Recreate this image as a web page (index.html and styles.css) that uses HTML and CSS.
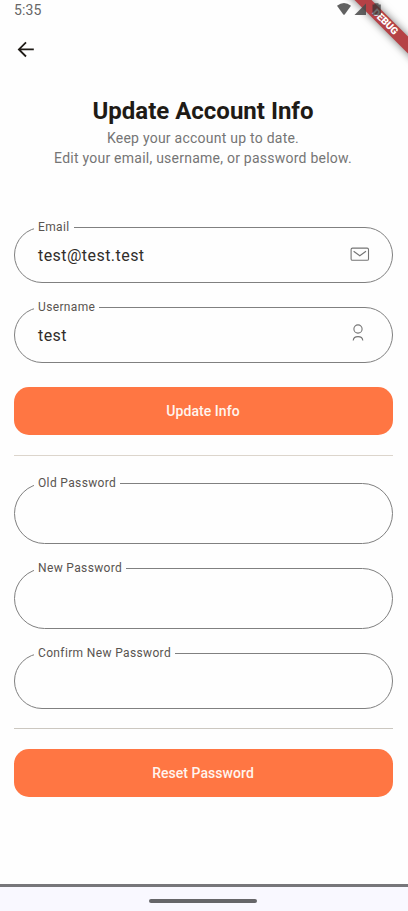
FILE: index.html
```html
<!DOCTYPE html>
<html lang="en">
<head>
<meta charset="utf-8">
<title>Update Account Info</title>
<link rel="stylesheet" href="styles.css">
</head>
<body>
<div class="screen">
  <header class="status">
    <span class="time">5:35</span>
    <svg class="status-icons" width="48" height="16" viewBox="0 0 48 16" fill="#4b4b4b" fill-opacity=".88">
      <path d="M0 5.8Q7 .4 14 5.8L7.7 14.5Q7 15.2 6.3 14.5Z"/>
      <path d="M29 3.5V15H17.5Z"/>
      <path fill="#333" fill-opacity=".72" d="M35.5 4.6h2V3.2h4v1.4h2.3V15.2h-8.3Z"/>
    </svg>
  </header>
  <div class="debug"><span>DEBUG</span></div>
  <nav class="toolbar">
    <svg width="18" height="18" viewBox="0 0 18 18" fill="none" stroke="#1f1b16" stroke-width="1.8"><path d="M16.8 9.4H2.2M9 2.3L1.9 9.4L9 16.5"/></svg>
  </nav>
  <main class="content">
    <h1>Update Account Info</h1>
    <p class="intro">Keep your account up to date.<br>Edit your email, username, or password below.</p>
    <form class="form">
      <div class="field">
        <label>Email</label>
        <span class="value">test@test.test</span>
        <svg class="icon mail" width="20" height="15" viewBox="0 0 20 15" fill="none" stroke="#747474" stroke-width="1.1"><rect x="1.1" y="1.1" width="17.4" height="12.2" rx="1.4"/><path d="M3.6 4.2L9.8 8.8L16 4.2"/></svg>
      </div>
      <div class="field">
        <label>Username</label>
        <span class="value">test</span>
        <svg class="icon user" width="12" height="18" viewBox="0 0 12 18" fill="none" stroke="#747474" stroke-width="1.1"><circle cx="6" cy="5" r="4.1"/><path d="M1.2 16.5C1.6 11.3 10.4 11.3 10.8 16.5"/></svg>
      </div>
      <button type="button">Update Info</button>
      <hr>
      <div class="field tall"><label>Old Password</label></div>
      <div class="field tall"><label>New Password</label></div>
      <div class="field last"><label>Confirm New Password</label></div>
      <hr class="second">
      <button type="button">Reset Password</button>
    </form>
  </main>
  <footer class="navbar"><span class="handle"></span></footer>
</div>
</body>
</html>
```
FILE: styles.css
```css
* { box-sizing: border-box; }
body { margin: 0; font-family: Roboto, sans-serif; background: #fefefe; color: #1f1b16; }
.screen { position: relative; width: 408px; height: 911px; overflow: hidden; display: flex; flex-direction: column; }
.status { position: relative; z-index: 1; height: 20px; display: flex; justify-content: space-between; padding: 0 23px 0 14px; }
.time { font-size: 14px; line-height: 20px; color: #666; letter-spacing: .1px; }
.debug { position: absolute; z-index: 0; top: 0; right: 0; width: 90px; height: 90px; overflow: hidden; }
.debug span { position: absolute; left: 7px; top: 16px; width: 120px; height: 12px; transform: rotate(45deg); background: #b54145; box-shadow: 0 0 9px rgba(0, 0, 0, .55); color: #fff; font-size: 10px; font-weight: 900; line-height: 12px; text-align: center; letter-spacing: -.1px; }
.toolbar { height: 56px; padding: 20px 0 0 17px; }
.toolbar svg { display: block; }
.content { flex: 1; padding: 19px 15px 0 14px; }
h1 { margin: 0 1px 0 0; font-size: 24px; line-height: 32px; font-weight: 700; text-align: center; }
.intro { margin: 1px 1px 0 0; font-size: 14px; line-height: 20px; letter-spacing: .24px; color: #757575; text-align: center; }
.form { margin-top: 59px; }
.field { position: relative; height: 56px; margin-bottom: 24px; padding: 0 22px 0 23px; border: 1px solid #808080; border-radius: 31px; display: flex; align-items: center; justify-content: space-between; }
.field.tall { height: 61px; }
.field.last { margin-bottom: 19px; }
.field label { position: absolute; left: 19px; top: -9px; padding: 0 4px 0 4px; background: #fefefe; font-size: 12px; line-height: 16px; letter-spacing: .36px; color: #595450; }
.value { padding-top: 2px; font-size: 16px; line-height: 24px; letter-spacing: .45px; color: #302d2a; }
.mail { margin-top: -1px; }
.user { margin: -4px 6px 0 0; }
button { display: block; width: 100%; height: 48px; border: 0; border-radius: 15px; background: #ff7643; color: #fff4ee; font: 500 14px/20px Roboto, sans-serif; letter-spacing: .05px; padding: 0 1px 0 0; }
hr { height: 1px; margin: 20px 0 27px; border: 0; background: #dcd5cc; }
.second { margin: 0 0 20px; background: #cbc7c0; }
.navbar { height: 27px; border-top: 3px solid #77767a; background: #f9f8ff; display: flex; justify-content: center; padding: 12px 2px 0 0; }
.handle { width: 108px; height: 4px; border-radius: 2px; background: #666669; }
```
